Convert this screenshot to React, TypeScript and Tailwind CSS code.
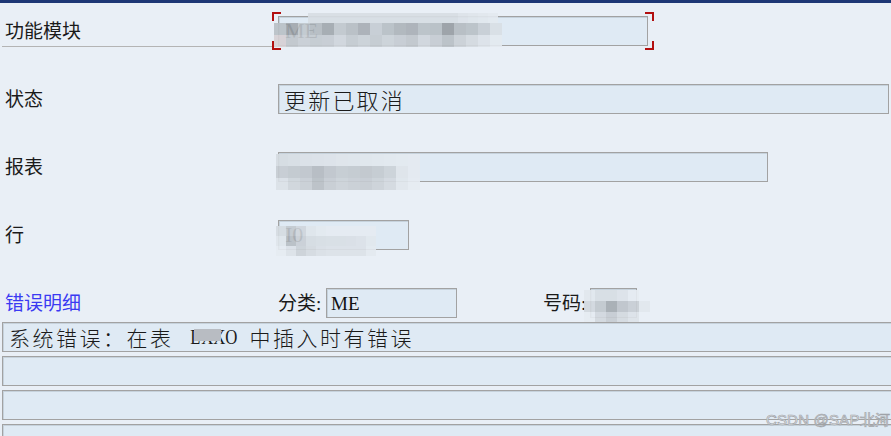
import React from 'react';

const font = "font-['Liberation_Serif','Noto_Sans_CJK_SC',serif]";

// mosaic blocks used to mimic the pixelated (redacted) parts of the screenshot
const Mosaic: React.FC<{ cells: string[]; className: string; cell?: number }> = ({ cells, className, cell = 12 }) => (
  <div className={`absolute flex flex-wrap opacity-90 ${className}`}>
    {cells.map((c, i) => (
      <div key={i} style={{ width: cell, height: cell, background: c }} />
    ))}
  </div>
);

const Field: React.FC<{ className: string; children?: React.ReactNode }> = ({ className, children }) => (
  <div
    className={`relative h-[30px] border border-[#a2a2a2] bg-[#dfeaf4] shadow-[inset_1px_1px_0_#c6d2dc] flex items-center overflow-hidden leading-none ${className}`}
  >
    {children}
  </div>
);

const Label: React.FC<{ text: string; blue?: boolean }> = ({ text, blue }) => (
  <div className={`w-[278px] shrink-0 pl-[5px] text-[19px] leading-none ${blue ? 'text-[#3a3af2]' : 'text-[#1a1a1a]'}`}>
    {text}
  </div>
);

const Corner: React.FC<{ pos: string }> = ({ pos }) => (
  <div className={`absolute w-[9px] h-[9px] border-[#b20f0f] ${pos}`} />
);

const cjk = "font-['Noto_Sans_CJK_SC',sans-serif] font-light";

export default function App() {
  return (
    <div className={`relative w-[891px] h-[436px] overflow-hidden bg-[#e9eff6] ${font}`}>
      <div className="h-[3px] bg-[#1d3775]" />

      <div className="flex flex-col gap-[38px] pt-[13px]">
        {/* row 1 */}
        <div className="relative flex items-center h-[30px]">
          <Label text="功能模块" />
          <div className="absolute left-[2px] top-[30px] w-[273px] h-px bg-[#b4b4b4]" />
          <div className="relative">
            <Field className="w-[370px]">
              <span className="pl-[6px] text-[22px] text-[#1a1a1a]">ME</span>
            </Field>
            <Corner pos="-left-[6px] -top-[4px] border-l-2 border-t-2" />
            <Corner pos="-right-[6px] -top-[4px] border-r-2 border-t-2" />
            <Corner pos="-left-[6px] -bottom-[4px] border-l-2 border-b-2" />
            <Corner pos="-right-[6px] -bottom-[4px] border-r-2 border-b-2" />
            <Mosaic
              className="left-[30px] top-[-3px] w-[190px]"
              cell={10}
              cells={[
                '#d8dee4', '#d8dee4', '#d8dee4', '#d8dee4', '#d8dee4', '#d8dee4', '#d8dee4', '#d8dee4', '#d8dee4', '#d8dee4', '#d8dee4', '#d8dee4', '#d8dee4', '#d8dee4', '#d8dee4', '#dde3e9', '#e0e6ec', '#e2e8ee', '#e4eaf0',
              ]}
            />
            <Mosaic
              className="left-[-4px] top-[7px] w-[228px]"
              cells={[
                '#b9c0c6', '#a1a7ad', '#c1c8ce', '#b4bbc1', '#a2a8ae', '#c0c7cd', '#b6bdc3', '#a8aeb4', '#c6cdd3', '#b8bfc5', '#aeb4ba', '#a9afb5', '#b9c0c6', '#b7bec4', '#979da3', '#b4bbc1', '#b9c0c6', '#c7ced4', '#d9dfe5',
                '#d7d0d4', '#c0c6cc', '#c8ced4', '#c4cad0', '#c6ccd2', '#d0d6dc', '#c4cad0', '#cbd1d7', '#c4cad0', '#ccd2d8', '#c6ccd2', '#c0c6cc', '#d0d6dc', '#c6ccd2', '#b9bfc5', '#cad0d6', '#d4dae0', '#dde3e9', '#e4eaf0',
              ]}
            />
          </div>
        </div>

        {/* row 2 */}
        <div className="flex items-center h-[30px]">
          <Label text="状态" />
          <Field className="w-[611px]">
            <span className={`pl-[5px] text-[22px] tracking-[2.2px] text-[#1a1a1a] ${cjk}`}>更新已取消</span>
          </Field>
        </div>

        {/* row 3 */}
        <div className="flex items-center h-[30px]">
          <Label text="报表" />
          <div className="relative">
            <Field className="w-[490px]" />
            <Mosaic
              className="left-[-2px] top-[2px] w-[144px]"
              cells={[
                '#d6dce2', '#d8dee4', '#dbe1e7', '#dce2e8', '#dde3e9', '#dfe5eb', '#e0e6ec', '#e1e7ed', '#e2e8ee', '#e3e9ef', '#e4eaf0', '#e5ebf1',
                '#c6ccd2', '#c2c8ce', '#bfc5cb', '#b4bac0', '#bfc5cb', '#c5cbd1', '#c3c9cf', '#c0c6cc', '#c4cad0', '#ccd2d8', '#dfe5eb', '#e5ebf1',
                '#dbe1e7', '#cfd5db', '#c8ced4', '#b9bfc5', '#c6ccd2', '#ccd2d8', '#c8ced4', '#c6ccd2', '#ccd2d8', '#d3d9df', '#e1e7ed', '#e6ecf2',
              ]}
            />
          </div>
        </div>

        {/* row 4 */}
        <div className="flex items-center h-[30px]">
          <Label text="行" />
          <div className="relative">
            <Field className="w-[131px]">
              <span className="pl-[6px] text-[22px] text-[#1a1a1a]">I0</span>
            </Field>
            <Mosaic
              className="left-[-2px] top-[6px] w-[100px]"
              cell={10}
              cells={[
                '#d6dce2', '#c3c9cf', '#d0d6dc', '#e0e6ec', '#e4eaf0', '#e6ecf2', '#e6ecf2', '#e6ecf2', '#e6ecf2', '#e6ecf2',
                '#e0e6ec', '#b8bec4', '#c9cfd5', '#d6dce2', '#d8dee4', '#d9dfe5', '#d9dfe5', '#dae0e6', '#dce2e8', '#e2e8ee',
                '#e6ecf2', '#dce2e8', '#ccd2d8', '#d4dae0', '#dae0e6', '#dce2e8', '#dce2e8', '#dce2e8', '#dce2e8', '#e4eaf0',
              ]}
            />
          </div>
        </div>

        {/* row 5 */}
        <div className="flex flex-col gap-[4px]">
          <div className="flex items-center h-[30px]">
            <Label text="错误明细" blue />
            <span className="w-[48px] shrink-0 text-[19px] leading-none text-[#1a1a1a]">分类:</span>
            <Field className="w-[131px]">
              <span className="pl-[4px] text-[19px] text-[#111]">ME</span>
            </Field>
            <span className="w-[47px] shrink-0 ml-[86px] text-[19px] leading-none text-[#1a1a1a]">号码:</span>
            <div className="relative">
              <Field className="w-[47px]" />
              <Mosaic
                className="left-[-6px] top-[2px] w-[66px]"
                cell={11}
                cells={[
                  '#e2e8ee', '#d8dee4', '#d8dee4', '#dde3e9', '#e6ecf2', '#e9eff6',
                  '#d2d8de', '#c2c8ce', '#a5abb1', '#bec4ca', '#c8ced4', '#e2e8ee',
                  '#e6ecf2', '#d2d8de', '#c6ccd2', '#d4dae0', '#dde3e9', '#e9eff6',
                ]}
              />
            </div>
          </div>

          <div className="flex flex-col gap-[4px] pl-[2px]">
            <Field className="w-[900px]">
              <span className={`pl-[6px] text-[21px] tracking-[2.5px] text-[#1a1a1a] ${cjk}`}>系统错误：在表</span>
              <span className="relative flex shrink-0 ml-[15px] w-[47px] text-[21px] text-[#1a1a1a] font-['Liberation_Serif',serif]">
                {'LXXO'.split('').map((ch, i) => (
                  <span key={i} className="w-[11.75px] text-center scale-x-[0.8]">
                    {ch}
                  </span>
                ))}
                <span className="absolute left-[5px] top-[2px] w-[27px] h-[12px] bg-[#b8bcc2]" />
              </span>
              <span className={`ml-[14px] text-[21px] tracking-[2.5px] text-[#1a1a1a] ${cjk}`}>中插入时有错误</span>
            </Field>
            <Field className="w-[900px]" />
            <Field className="w-[900px]" />
            <Field className="w-[900px]" />
          </div>
        </div>
      </div>

      <div className="absolute right-[1px] top-[409px] text-[15px] font-['Liberation_Sans',sans-serif] text-[#eef0f2] [-webkit-text-stroke:0.7px_#9fa3a8] tracking-[0.2px]">
        CSDN @SAP北河
      </div>
    </div>
  );
}
